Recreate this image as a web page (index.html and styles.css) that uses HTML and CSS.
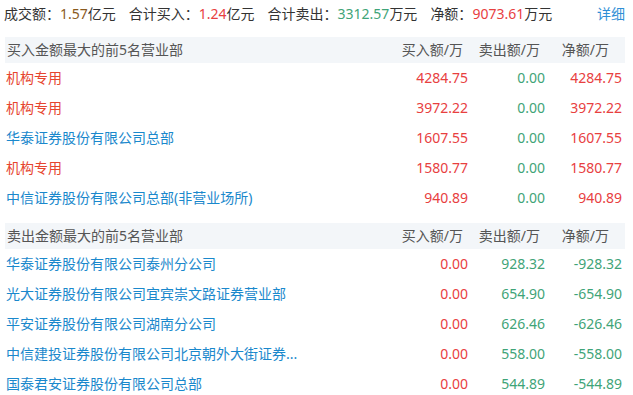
FILE: index.html
```html
<!DOCTYPE html>
<html lang="zh-CN">
<head>
<meta charset="utf-8">
<link rel="stylesheet" href="styles.css">
</head>
<body>
<div class="summary">
  <span class="item">成交额：<span class="v-amt">1.57</span>亿元</span>
  <span class="item">合计买入：<span class="up">1.24</span>亿元</span>
  <span class="item">合计卖出：<span class="down">3312.57</span>万元</span>
  <span class="item">净额：<span class="up">9073.61</span>万元</span>
  <a class="detail">详细</a>
</div>

<div class="section">
  <div class="head">
    <div class="name">买入金额最大的前5名营业部</div>
    <div class="col h-buy">买入额/万</div>
    <div class="col h-sell">卖出额/万</div>
    <div class="col h-net">净额/万</div>
  </div>
  <div class="row"><div class="name inst">机构专用</div><div class="col up">4284.75</div><div class="col down">0.00</div><div class="col up">4284.75</div></div>
  <div class="row"><div class="name inst">机构专用</div><div class="col up">3972.22</div><div class="col down">0.00</div><div class="col up">3972.22</div></div>
  <div class="row"><div class="name link">华泰证券股份有限公司总部</div><div class="col up">1607.55</div><div class="col down">0.00</div><div class="col up">1607.55</div></div>
  <div class="row"><div class="name inst">机构专用</div><div class="col up">1580.77</div><div class="col down">0.00</div><div class="col up">1580.77</div></div>
  <div class="row"><div class="name link">中信证券股份有限公司总部(非营业场所)</div><div class="col up">940.89</div><div class="col down">0.00</div><div class="col up">940.89</div></div>
</div>

<div class="section second">
  <div class="head">
    <div class="name">卖出金额最大的前5名营业部</div>
    <div class="col h-buy">买入额/万</div>
    <div class="col h-sell">卖出额/万</div>
    <div class="col h-net">净额/万</div>
  </div>
  <div class="row"><div class="name link">华泰证券股份有限公司泰州分公司</div><div class="col up">0.00</div><div class="col down">928.32</div><div class="col down">-928.32</div></div>
  <div class="row"><div class="name link">光大证券股份有限公司宜宾崇文路证券营业部</div><div class="col up">0.00</div><div class="col down">654.90</div><div class="col down">-654.90</div></div>
  <div class="row"><div class="name link">平安证券股份有限公司湖南分公司</div><div class="col up">0.00</div><div class="col down">626.46</div><div class="col down">-626.46</div></div>
  <div class="row"><div class="name link">中信建投证券股份有限公司北京朝外大街证券...</div><div class="col up">0.00</div><div class="col down">558.00</div><div class="col down">-558.00</div></div>
  <div class="row"><div class="name link">国泰君安证券股份有限公司总部</div><div class="col up">0.00</div><div class="col down">544.89</div><div class="col down">-544.89</div></div>
</div>
</body>
</html>
```
FILE: styles.css
```css
html, body {
  margin: 0;
  padding: 0;
  background: #fff;
}
body {
  font-family: "Noto Sans", "Noto Sans CJK SC", sans-serif;
  font-size: 14px;
  color: #333;
  width: 633px;
  overflow: hidden;
}
.summary {
  display: flex;
  align-items: center;
  height: 28px;
  line-height: 28px;
  padding: 0 8px 0 4px;
  white-space: nowrap;
}
.summary .item {
  margin-right: 13px;
}
.v-amt { color: #8a5a1e; }
.detail {
  margin-left: auto;
  color: #2f8fd6;
  cursor: pointer;
}
.up { color: #e8403f; }
.down { color: #3fa478; }

.section {
  margin: 9px 8px 0 5px;
}
.section.second {
  margin-top: 10px;
}
.head, .row {
  display: flex;
  align-items: center;
}
.head {
  height: 26px;
  line-height: 26px;
  background: #f3f6f9;
  color: #555;
}
.head .name {
  padding-left: 2px;
}
.row {
  height: 30px;
  line-height: 30px;
}
.name {
  flex: 1;
  min-width: 0;
  padding-left: 1px;
  white-space: nowrap;
}
.inst { color: #e6452f; }
.link { color: #1a88cc; }
.col {
  width: 77px;
  text-align: right;
  white-space: nowrap;
}
.row .col:last-child {
  padding-right: 3px;
}
.h-buy { padding-right: 5px; width: 72px; }
.h-sell { padding-right: 5px; width: 72px; }
.h-net { padding-right: 16px; width: 64px; }
```
